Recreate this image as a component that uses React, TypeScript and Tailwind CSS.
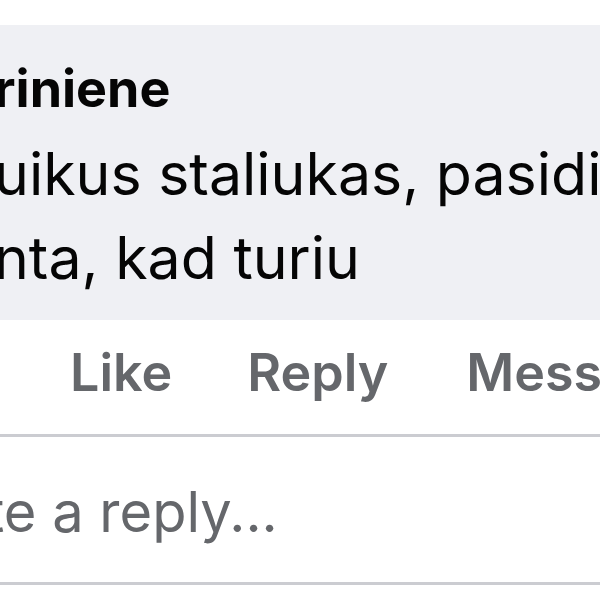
import React from "react";

const FONT = { fontFamily: "Inter, 'Noto Sans', sans-serif" };

export default function App() {
  return (
    <div className="w-[600px] h-[600px] overflow-hidden bg-white" style={FONT}>
      <div className="pt-[25px]">
        <div className="bg-[#eff0f4] -ml-[6px] w-[620px] h-[295px] pt-[38px]">
          <div className="text-[52px] font-bold leading-[52px] text-[#050505]">
            riniene
          </div>
          <div className="mt-[17px] text-[59px] leading-[84px] text-[#050505] whitespace-nowrap">
            <div>uikus staliukas, pasidi</div>
            <div>nta, kad turiu</div>
          </div>
        </div>
        <div className="flex items-start h-[114px] pt-[27px] text-[52px] leading-[52px] font-semibold text-[#65676b] whitespace-nowrap">
          <span className="ml-[70px]">Like</span>
          <span className="ml-[75px]">Reply</span>
          <span className="ml-[78px]">Message</span>
        </div>
        <div className="h-[3px] bg-[#cbccd1]" />
        <div className="h-[145px] pt-[47px] -ml-[14px] text-[56px] leading-[56px] text-[#65676b] whitespace-nowrap">
          te a reply...
        </div>
        <div className="h-[3px] bg-[#cbccd1]" />
      </div>
    </div>
  );
}
